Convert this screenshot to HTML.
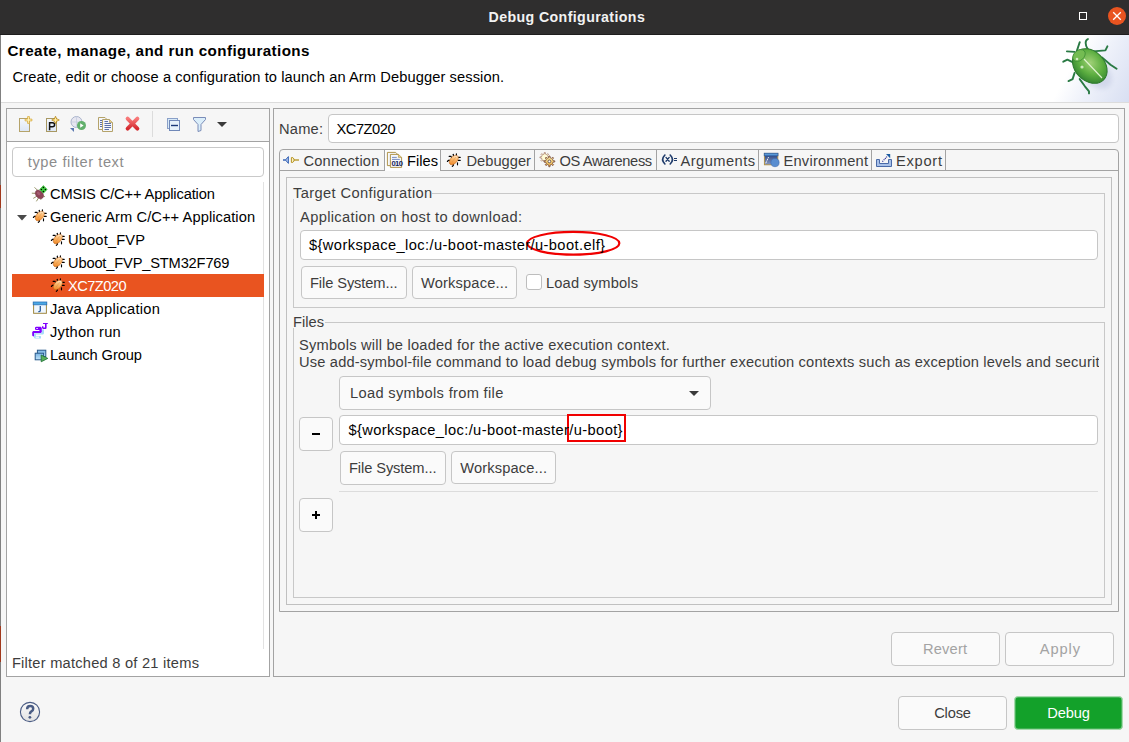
<!DOCTYPE html>
<html><head><meta charset="utf-8">
<style>
html,body{margin:0;padding:0;}
body{width:1129px;height:742px;position:relative;overflow:hidden;background:#f6f6f6;font-family:"Liberation Sans",sans-serif;}
.a{position:absolute;box-sizing:border-box;}
.t{position:absolute;white-space:nowrap;line-height:0;font-family:"Liberation Sans",sans-serif;}
.btn{position:absolute;box-sizing:border-box;background:#fafafa;border:1px solid #c6c6c6;border-radius:4px;}
.inp{position:absolute;box-sizing:border-box;background:#fff;border:1px solid #c6c6c6;border-radius:4px;}
svg{position:absolute;overflow:visible;}
</style></head>
<body>
<!-- title bar -->
<div class="a" style="left:0;top:0;width:1129px;height:35px;background:#2f2e2e;"></div>
<div class="a" style="left:0;top:34px;width:1129px;height:1px;background:#1e1d1d;"></div>
<div class="a" style="left:1079px;top:12px;width:8.4px;height:8.4px;border:1.4px solid #fff;"></div>
<svg style="left:1108px;top:7px" width="18" height="18" viewBox="0 0 18 18">
 <circle cx="9" cy="9" r="9" fill="#e95420"/>
 <path d="M5.2 5.2 L12.8 12.8 M12.8 5.2 L5.2 12.8" stroke="#fff" stroke-width="1.3"/>
</svg>
<!-- header -->
<div class="a" style="left:0;top:35px;width:1129px;height:67px;background:#fff;"></div>
<div class="a" style="left:0;top:102px;width:1129px;height:1px;background:#dcdcdc;"></div>
<div class="a" style="left:1040px;top:35px;width:89px;height:67px;background:linear-gradient(118deg,#ffffff 38%,#eef1fa 62%,#d8dff2 100%);"></div>
<!-- beetle -->
<svg style="left:1049px;top:34px" width="80" height="68" viewBox="0 0 80 68">
 <defs>
  <radialGradient id="bg1" cx="0.45" cy="0.4" r="0.65">
   <stop offset="0" stop-color="#9fd076"/><stop offset="0.55" stop-color="#5cae40"/><stop offset="1" stop-color="#2f7f2f"/>
  </radialGradient>
  <filter id="blr" x="-50%" y="-50%" width="200%" height="200%"><feGaussianBlur stdDeviation="2.5"/></filter>
 </defs>
 <ellipse cx="46" cy="38" rx="20" ry="13" fill="#b8c0dc" opacity="0.45" filter="url(#blr)" transform="rotate(45 46 38)"/>
 <g stroke="#2a7a44" stroke-width="1.9" fill="none" stroke-linecap="round" stroke-linejoin="round">
  <path d="M27.7 17.4 L30.7 8.2"/>
  <path d="M25.6 17.9 L17.9 17.4"/>
  <path d="M38.9 15.4 C35.9 11 35.9 6.1 38.9 5.1"/>
  <path d="M44 17.4 L56.4 16.4 L58.4 12.3"/>
  <path d="M53.3 23.6 L61.5 30.7 L67.6 34.8"/>
  <path d="M24.6 28.7 L18.4 25.6 L14.3 27.7"/>
  <path d="M25.6 38.9 L23.6 45.1 L19.5 47.1"/>
  <path d="M30.7 45.1 L35.9 52.3 L40 57.4 L40 59.4"/>
 </g>
 <ellipse cx="40.8" cy="32" rx="19.5" ry="14.8" fill="url(#bg1)" stroke="#2d7a2d" stroke-width="1" transform="rotate(45 40.8 32)"/>
 <ellipse cx="30" cy="21.5" rx="7" ry="5" fill="#74bc52" stroke="#3a8a34" stroke-width="0.7" transform="rotate(-40 30 21.5)"/>
 <path d="M35 25 L53 44" stroke="#e0f4d0" stroke-width="1.1"/>
 <circle cx="33" cy="33" r="1.6" fill="#e8f6dc" opacity="0.8"/><circle cx="28" cy="25" r="1.3" fill="#e8f6dc" opacity="0.8"/>
</svg>

<!-- left edge sliver -->
<div class="a" style="left:0;top:35px;width:1px;height:707px;background:#808080;"></div>
<div class="a" style="left:0;top:185px;width:1px;height:23px;background:#a0381c;"></div>
<div class="a" style="left:0;top:626px;width:1px;height:36px;background:#a0381c;"></div>

<!-- LEFT PANEL -->
<div class="a" style="left:6px;top:108px;width:264px;height:569px;border:1px solid #a3a3a3;background:#fff;"></div>
<div class="a" style="left:7px;top:109px;width:262px;height:32px;background:#f6f6f6;"></div>
<div class="a" style="left:7px;top:141px;width:262px;height:1px;background:#a3a3a3;"></div>
<div class="a" style="left:152px;top:111px;width:1px;height:26px;background:#dcdcdc;"></div>
<div class="inp" style="left:12px;top:147px;width:252px;height:30px;border-color:#c9c9c9;"></div>
<div class="a" style="left:263px;top:182px;width:1px;height:467px;background:#e2e2e2;"></div>
<div class="a" style="left:12px;top:274px;width:252px;height:23px;background:#e95420;"></div>

<!-- toolbar icons -->
<svg style="left:18px;top:116px" width="16" height="17" viewBox="0 0 16 17">
 <defs><linearGradient id="pg" x1="0" y1="0" x2="0" y2="1"><stop offset="0" stop-color="#f4f7fc"/><stop offset="1" stop-color="#dce6f5"/></linearGradient></defs>
 <rect x="1.5" y="2.5" width="10" height="13" fill="url(#pg)" stroke="#b5a36a"/>
 <path d="M9.6 0.6 H11.4 V3.1 H13.9 V4.9 H11.4 V7.4 H9.6 V4.9 H7.1 V3.1 H9.6 Z" fill="#fff6c0" stroke="#d8a838" stroke-width="0.8"/>
</svg>
<svg style="left:45px;top:116px" width="16" height="17" viewBox="0 0 16 17">
 <rect x="1.5" y="2.5" width="10" height="13" fill="url(#pg)" stroke="#a89862"/>
 <path d="M4.6 14.2 V6.8 H7.4 Q9.6 6.8 9.6 8.8 Q9.6 10.8 7.4 10.8 H4.6" fill="none" stroke="#111" stroke-width="1.5"/>
 <path d="M10.5 0.2 Q11 3.4 14.3 4 Q11 4.6 10.5 7.8 Q10 4.6 6.7 4 Q10 3.4 10.5 0.2 Z" fill="#f2c850" stroke="#b08010" stroke-width="0.7"/>
 <path d="M10.5 2 V6 M8.5 4 H12.5" stroke="#fff8c8" stroke-width="0.7"/>
</svg>
<svg style="left:69px;top:115px" width="18" height="18" viewBox="0 0 18 18">
 <circle cx="7.5" cy="7" r="5.5" fill="#e6e6f0" stroke="#aab4cc" stroke-width="1"/>
 <path d="M2.5 7 H12.5 M7.5 1.5 V12.5" stroke="#c0c8dc" stroke-width="0.7"/>
 <path d="M1 13 L5 13 L5 17 Z" fill="#5a78b0"/>
 <circle cx="12.5" cy="10.5" r="4.5" fill="#62b06c"/>
 <path d="M11.2 8.3 L14.6 10.5 L11.2 12.7 Z" fill="#fff"/>
</svg>
<svg style="left:97px;top:116px" width="17" height="17" viewBox="0 0 17 17">
 <path d="M1.5 1.5 H8 L10 3.5 V13.5 H1.5 Z" fill="#f4f6fb" stroke="#b5a36a"/>
 <path d="M5.5 3.5 H12.5 L15.5 6.5 V15.5 H5.5 Z" fill="#f4f6fb" stroke="#b5a36a"/>
 <path d="M12.5 3.5 V6.5 H15.5" fill="#e8d090" stroke="#b5a36a" stroke-width="0.8"/>
 <path d="M7.5 5.5 H11 M7.5 7.5 H14 M7.5 9.5 H14 M7.5 11.5 H14 M7.5 13.5 H12 M3 4.5 H5 M3 6.5 H5 M3 8.5 H5 M3 10.5 H5" stroke="#5a70a8" stroke-width="1"/>
</svg>
<svg style="left:125px;top:116px" width="15" height="16" viewBox="0 0 15 16">
 <defs><linearGradient id="xg" x1="0" y1="0" x2="0" y2="1"><stop offset="0" stop-color="#f87878"/><stop offset="1" stop-color="#d42a30"/></linearGradient></defs>
 <path d="M2.6 2.6 L12.4 12.6 M12.4 2.6 L2.6 12.6" stroke="url(#xg)" stroke-width="3.9" stroke-linecap="round"/>
</svg>
<svg style="left:166px;top:117px" width="15" height="15" viewBox="0 0 15 15">
 <rect x="1.5" y="1.5" width="10" height="10" fill="#d8eaf8" stroke="#8aa0c8"/>
 <rect x="3.5" y="3.5" width="10" height="10" fill="#e6f2fb" stroke="#7088b8"/>
 <path d="M5 8.5 H12" stroke="#1a3a7a" stroke-width="1.4"/>
</svg>
<svg style="left:192px;top:116px" width="15" height="17" viewBox="0 0 15 17">
 <path d="M1.5 1.5 H13.5 V3.5 L9 8.5 V14.5 L6 15.5 V8.5 L1.5 3.5 Z" fill="#dbeefa" stroke="#7a8cb8"/>
</svg>
<svg style="left:217px;top:122px" width="10" height="5" viewBox="0 0 10 5">
 <path d="M0 0 H10 L5 5 Z" fill="#3a3a3a"/>
</svg>

<!-- tree icons -->
<svg style="left:31px;top:184px" width="18" height="18" viewBox="0 0 18 18">
 <g stroke="#8c8a5a" stroke-width="0.9" fill="none" stroke-linecap="round">
  <path d="M3.8 3.6 L6.4 6.2 M1.2 9.2 L5 9.4 M2.6 14.2 L5.6 12.4 M5.6 17 L7.6 13.8 M9.8 15.4 L10.4 13.6 M13.6 12.6 L11.8 11.6"/>
 </g>
 <ellipse cx="8.4" cy="10.4" rx="3.5" ry="4.9" fill="#8e4458" stroke="#6a3040" stroke-width="0.4" transform="rotate(-42 8.4 10.4)"/>
 <ellipse cx="7.6" cy="9.4" rx="1.4" ry="2" fill="#b06a80" opacity="0.6" transform="rotate(-42 7.6 9.4)"/>
 <path d="M12.4 1.6 L16.2 5.4 L12.4 9.2 L8.6 5.4 Z" fill="#3ed23e" stroke="#1a9a1a" stroke-width="0.5"/>
 <circle cx="12.4" cy="3.4" r="0.75" fill="#000"/><circle cx="14.4" cy="5.4" r="0.75" fill="#000"/><circle cx="10.4" cy="5.4" r="0.75" fill="#000"/><circle cx="12.4" cy="7.4" r="0.75" fill="#000"/>
</svg>
<!-- expand triangle -->
<svg style="left:17px;top:215px" width="10" height="6" viewBox="0 0 10 6"><path d="M0 0 H10 L5 5.5 Z" fill="#4a4a4a"/></svg>

<!-- RIGHT PANEL -->
<div class="a" style="left:273px;top:108px;width:852px;height:569px;border:1px solid #a3a3a3;"></div>
<div class="inp" style="left:328px;top:114px;width:791px;height:29px;"></div>
<!-- tab folder -->
<div class="a" style="left:279px;top:149px;width:840px;height:463px;border:1px solid #a3a3a3;border-radius:4px 4px 0 0;"></div>
<div class="a" style="left:280px;top:170px;width:838px;height:1px;background:#a3a3a3;"></div>
<div class="a" style="left:384px;top:150px;width:57px;height:21px;background:#fdfdfd;border-left:1px solid #a3a3a3;border-right:1px solid #a3a3a3;"></div>
<div class="a" style="left:534px;top:150px;width:1px;height:20px;background:#a3a3a3;"></div>
<div class="a" style="left:656px;top:150px;width:1px;height:20px;background:#a3a3a3;"></div>
<div class="a" style="left:758px;top:150px;width:1px;height:20px;background:#a3a3a3;"></div>
<div class="a" style="left:871px;top:150px;width:1px;height:20px;background:#a3a3a3;"></div>
<div class="a" style="left:945px;top:150px;width:1px;height:20px;background:#a3a3a3;"></div>
<div class="a" style="left:286px;top:177px;width:826px;height:428px;border:1px solid #c0c0c0;"></div>
<!-- target config group -->
<div class="a" style="left:293px;top:193px;width:812px;height:115px;border:1px solid #c8c8c8;"></div>
<div class="a" style="left:292px;top:183px;width:140px;height:16px;background:#f6f6f6;"></div>
<div class="inp" style="left:300px;top:230px;width:798px;height:30px;"></div>
<div class="btn" style="left:301px;top:266px;width:106px;height:33px;"></div>
<div class="btn" style="left:412px;top:266px;width:105px;height:33px;"></div>
<div class="a" style="left:526px;top:274px;width:16px;height:16px;border:1px solid #bdbdbd;border-radius:3px;background:#fff;"></div>
<svg style="left:524px;top:229px" width="100" height="30" viewBox="0 0 100 30">
 <ellipse cx="49.25" cy="14.3" rx="46.1" ry="11.4" fill="none" stroke="#f00000" stroke-width="2.2"/>
</svg>
<!-- files group -->
<div class="a" style="left:293px;top:322px;width:812px;height:276px;border:1px solid #c8c8c8;"></div>
<div class="a" style="left:292px;top:312px;width:33px;height:16px;background:#f6f6f6;"></div>
<div class="btn" style="left:339px;top:376px;width:372px;height:34px;"></div>
<svg style="left:689px;top:391px" width="10" height="5" viewBox="0 0 10 5"><path d="M0 0 H10 L5 5 Z" fill="#3a3a3a"/></svg>
<div class="btn" style="left:299px;top:417px;width:34px;height:34px;"></div>
<div class="a" style="left:312px;top:433px;width:8px;height:2px;background:#000;"></div>
<div class="inp" style="left:339px;top:415px;width:759px;height:30px;"></div>
<div class="btn" style="left:340px;top:451px;width:106px;height:34px;"></div>
<div class="btn" style="left:451px;top:451px;width:105px;height:33px;"></div>
<div class="a" style="left:339px;top:491px;width:759px;height:1px;background:#dcdcdc;"></div>
<div class="btn" style="left:299px;top:498px;width:34px;height:34px;"></div>
<div class="a" style="left:312px;top:514px;width:8px;height:2px;background:#000;"></div>
<div class="a" style="left:315px;top:511px;width:2px;height:8px;background:#000;"></div>
<div class="a" style="left:567px;top:414px;width:59px;height:28px;border:2px solid #f00000;"></div>

<!-- bottom buttons -->
<div class="btn" style="left:891px;top:632px;width:109px;height:34px;"></div>
<div class="btn" style="left:1005px;top:632px;width:109px;height:34px;"></div>
<div class="btn" style="left:898px;top:696px;width:109px;height:34px;"></div>
<div class="a" style="left:1014px;top:696px;width:109px;height:34px;background:#13a12a;border:1px solid #a6dbad;box-shadow:inset 0 0 0 0.6px #6cc07a;border-radius:4px;"></div>
<svg style="left:19px;top:701px" width="22" height="22" viewBox="0 0 22 22">
 <defs><linearGradient id="hg" x1="0" y1="0" x2="0" y2="1"><stop offset="0" stop-color="#fbfbfb"/><stop offset="1" stop-color="#e2e2e2"/></linearGradient></defs>
 <circle cx="11" cy="11" r="9.6" fill="url(#hg)" stroke="#4a5c84" stroke-width="1.1"/>
 <path d="M8.1 8.2 Q8.2 5.1 11.2 5.1 Q14.2 5.1 14.2 7.7 Q14.2 9.4 12.4 10.4 Q11 11.2 11 12.6 V13.3" fill="none" stroke="#4a5c84" stroke-width="2.5"/>
 <circle cx="10.9" cy="16.3" r="1.4" fill="#4a5c84"/>
</svg>


<!-- symbol defs -->
<svg width="0" height="0" style="position:absolute;left:0;top:0">
 <defs>
  <linearGradient id="bugg" x1="0.3" y1="0" x2="0.7" y2="1">
   <stop offset="0" stop-color="#fff2dc"/><stop offset="0.35" stop-color="#fcc07a"/><stop offset="1" stop-color="#ee8420"/>
  </linearGradient>
  <symbol id="bug" viewBox="0 0 20 20">
   <g stroke="#000" stroke-width="1.15" fill="none" stroke-linecap="round">
    <path d="M9.4 4.2 V6"/><path d="M12.4 3.9 V6"/>
    <path d="M14.3 7.4 H16.2"/><path d="M14.3 10.4 H16.2"/>
    <path d="M5.1 6.3 H6.9 L7.7 7.8"/><path d="M6 10.4 H4.4 L3.4 11.5"/>
    <path d="M9.3 14.3 V15.5 L8.3 16.4"/><path d="M13.5 12.7 V14.8"/>
   </g>
   <ellipse cx="9.8" cy="10" rx="3.4" ry="5.6" fill="url(#bugg)" stroke="#c06010" stroke-width="0.5" transform="rotate(42 9.8 10)"/>
   <path d="M8 12 L12 7" stroke="#c87830" stroke-width="0.5" opacity="0.6"/>
  </symbol>
 </defs>
</svg>
<!-- tree bug icons -->
<svg style="left:30px;top:206px" width="20" height="20"><use href="#bug" width="20" height="20"/></svg>
<svg style="left:48px;top:229px" width="20" height="20"><use href="#bug" width="20" height="20"/></svg>
<svg style="left:48px;top:252px" width="20" height="20"><use href="#bug" width="20" height="20"/></svg>
<svg style="left:48px;top:275px" width="20" height="20"><use href="#bug" width="20" height="20"/></svg>
<!-- java -->
<svg style="left:30px;top:298px" width="20" height="20" viewBox="0 0 20 20">
 <rect x="3.6" y="4.5" width="12.8" height="10.8" fill="#eef7ff" stroke="#a08840" stroke-width="1"/>
 <rect x="3.2" y="4" width="13.6" height="2.8" fill="#4aa8e4" stroke="#2a70b8" stroke-width="0.8"/>
 <path d="M10.3 8 V12.6 Q10.3 13.6 9.2 13.6 H8.3" stroke="#2a5a98" stroke-width="1.3" fill="none"/>
</svg>
<!-- jython -->
<svg style="left:30px;top:321px" width="20" height="20" viewBox="0 0 20 20">
 <path d="M12 8.5 H14 V12.4 L13 13.6 H6 V15 H10.6 L11 15.6 V17.6 H4.8 L4 16.8 V12.2 H11.4 Z" fill="#a8dcf8"/>
 <path d="M5.6 15.6 H9 V16.8 H5.6 Z" fill="#fff"/>
 <path d="M6 5.8 H10.8 L11.8 7 V11 L10.8 12 H4 V15.2 L3.2 15.6 L2.2 14.6 V11 L3.2 10 H9.4 V9 H5.8 L5 8.2 V6.6 Z" fill="#8000ff"/>
 <path d="M6.2 7 H8 V7.8 H6.2 Z" fill="#fff"/>
 <path d="M13 2 H17.8 V2.9 H16.6 V7.2 L15.8 8 H13 L12 7 V5.2 H13.4 V6.6 H15 V2.9 H13 Z" fill="#8000ff"/>
</svg>
<!-- launch group -->
<svg style="left:30px;top:344px" width="20" height="20" viewBox="0 0 20 20">
 <defs><linearGradient id="lgb" x1="0" y1="0" x2="0" y2="1"><stop offset="0" stop-color="#7ab4e4"/><stop offset="1" stop-color="#c0e4fa"/></linearGradient></defs>
 <rect x="7.4" y="6.2" width="8.4" height="6.4" fill="url(#lgb)" stroke="#2a5a8a" stroke-width="1"/>
 <rect x="5.2" y="9.2" width="8.4" height="6.6" fill="url(#lgb)" stroke="#2a5a8a" stroke-width="1"/>
 <path d="M11.2 11 L17.8 14.4 L11.2 17.8 Z" fill="#5ab05a" stroke="#1a7030" stroke-width="0.8"/>
</svg>

<!-- tab icons -->
<svg style="left:280px;top:150px" width="20" height="20" viewBox="0 0 20 20">
 <path d="M3 9.3 H5.6 V10.7 H3 Z" fill="#2a5ab0"/>
 <path d="M5.4 10 L8.4 6.6 V13.4 Z" fill="#a8c0e8" stroke="#2a5ab0" stroke-width="0.9"/>
 <path d="M12.8 7.6 H11.4 V12.4 H12.8 L14 11 V9 Z" fill="#f8f0c8" stroke="#b08a10" stroke-width="0.9"/>
 <path d="M14 9.4 H19 V10.6 H14 Z" fill="#b08a10"/>
</svg>
<svg style="left:385px;top:150px" width="20" height="20" viewBox="0 0 20 20">
 <path d="M2.4 2.4 H10.6 L12 3.8 V15.6 H2.4 Z" fill="#f6f8fc" stroke="#a88a38" stroke-width="0.9"/>
 <path d="M5.4 4.4 H13.4 L16.6 7.4 V17.4 H5.4 Z" fill="#f6f8fc" stroke="#a88a38" stroke-width="0.9"/>
 <path d="M13.4 4.4 V7.4 H16.6" fill="#e8d090" stroke="#a88a38" stroke-width="0.6"/>
 <path d="M7 7.4 H11.8 M7 9.4 H14.8" stroke="#6a80b8" stroke-width="0.9"/>
 <text x="6.4" y="16" font-family="Liberation Sans" font-size="7.6" font-weight="bold" fill="#13245e" letter-spacing="-0.5">010</text>
</svg>
<svg style="left:443.5px;top:150.2px" width="20" height="20"><use href="#bug" width="20" height="20"/></svg>
<svg style="left:537px;top:150px" width="20" height="20" viewBox="0 0 20 20">
 <defs><linearGradient id="gg" x1="0" y1="0" x2="0" y2="1"><stop offset="0" stop-color="#fff6b0"/><stop offset="1" stop-color="#e8a840"/></linearGradient></defs>
 <path d="M7.22 4.05 L7.30 2.53 L8.30 2.53 L8.38 4.05 L9.76 4.62 L10.89 3.60 L11.60 4.31 L10.58 5.44 L11.15 6.82 L12.67 6.90 L12.67 7.90 L11.15 7.98 L10.58 9.36 L11.60 10.49 L10.89 11.20 L9.76 10.18 L8.38 10.75 L8.30 12.27 L7.30 12.27 L7.22 10.75 L5.84 10.18 L4.71 11.20 L4.00 10.49 L5.02 9.36 L4.45 7.98 L2.93 7.90 L2.93 6.90 L4.45 6.82 L5.02 5.44 L4.00 4.31 L4.71 3.60 L5.84 4.62 Z" fill="#fffbd6" stroke="#a88070" stroke-width="0.8"/>
 <path d="M11.75 7.66 L11.85 6.03 L12.95 6.03 L13.05 7.66 L14.59 8.29 L15.81 7.21 L16.59 7.99 L15.51 9.21 L16.14 10.75 L17.77 10.85 L17.77 11.95 L16.14 12.05 L15.51 13.59 L16.59 14.81 L15.81 15.59 L14.59 14.51 L13.05 15.14 L12.95 16.77 L11.85 16.77 L11.75 15.14 L10.21 14.51 L8.99 15.59 L8.21 14.81 L9.29 13.59 L8.66 12.05 L7.03 11.95 L7.03 10.85 L8.66 10.75 L9.29 9.21 L8.21 7.99 L8.99 7.21 L10.21 8.29 Z" fill="url(#gg)" stroke="#7a5040" stroke-width="0.9"/>
 <circle cx="12.4" cy="11.4" r="1.4" fill="#fff" stroke="#5a4a48" stroke-width="0.9"/>
</svg>
<svg style="left:660px;top:150px" width="20" height="20" viewBox="0 0 20 20">
 <path d="M4.9 5 Q0.4 9.5 4.9 14" stroke="#1e3a6a" stroke-width="1.6" fill="none" stroke-linecap="round"/>
 <path d="M10.2 5 Q14.7 9.5 10.2 14" stroke="#1e3a6a" stroke-width="1.6" fill="none" stroke-linecap="round"/>
 <path d="M6 7.4 L9.2 11.3 M9.2 7.4 L6 11.3" stroke="#1e3a6a" stroke-width="1.35" stroke-linecap="round"/>
 <path d="M14 8.5 H17 M14 10.5 H17" stroke="#1e3a6a" stroke-width="1.2"/>
</svg>
<svg style="left:762px;top:150px" width="20" height="20" viewBox="0 0 20 20">
 <defs><linearGradient id="eg" x1="0" y1="0" x2="0" y2="1"><stop offset="0" stop-color="#1e3a78"/><stop offset="1" stop-color="#8a9ac0"/></linearGradient></defs>
 <rect x="2.4" y="3.4" width="13.4" height="11.4" fill="url(#eg)" stroke="#b09040" stroke-width="0.9"/>
 <rect x="2.2" y="3.2" width="13.8" height="2.6" fill="#5a9ad8" stroke="#2a5aa0" stroke-width="0.7"/>
 <path d="M3.8 13.2 L6.6 7" stroke="#fff" stroke-width="1" stroke-dasharray="1.2 0.6"/>
 <circle cx="13" cy="12.6" r="4.1" fill="#5a8ed0" stroke="#3a6ab0" stroke-width="0.6"/>
</svg>
<svg style="left:874px;top:150px" width="20" height="20" viewBox="0 0 20 20">
 <path d="M2.5 9.5 H5.5 V13.5 H14.5 V9.5 H17.5 V16.5 H2.5 Z" fill="#a8c0e8" stroke="#4a6aa8" stroke-width="1"/>
 <path d="M8.4 11.6 L13 6.6" stroke="#2a2a98" stroke-width="1.15" stroke-dasharray="1.1 0.8"/>
 <path d="M12 4 H16.2 V8.2 Z" fill="#1a5aa0"/>
</svg>

<div class="t" style="left:488.50px;top:16.58px;font-size:14.2px;color:#f2f2f2;font-weight:bold;letter-spacing:0.387px;">Debug Configurations</div>
<div class="t" style="left:7.50px;top:50.73px;font-size:15.2px;color:#000;font-weight:bold;letter-spacing:0.407px;">Create, manage, and run configurations</div>
<div class="t" style="left:12.50px;top:76.62px;font-size:14.67px;color:#000;letter-spacing:0.094px;">Create, edit or choose a configuration to launch an Arm Debugger session.</div>
<div class="t" style="left:27.80px;top:162.12px;font-size:14.67px;color:#8c8c8c;letter-spacing:0.576px;">type filter text</div>
<div class="t" style="left:50.00px;top:193.72px;font-size:14.67px;color:#000;letter-spacing:-0.133px;">CMSIS C/C++ Application</div>
<div class="t" style="left:50.00px;top:216.72px;font-size:14.67px;color:#000;letter-spacing:0.080px;">Generic Arm C/C++ Application</div>
<div class="t" style="left:68.00px;top:239.72px;font-size:14.67px;color:#000;letter-spacing:0.154px;">Uboot_FVP</div>
<div class="t" style="left:68.00px;top:262.72px;font-size:14.67px;color:#000;letter-spacing:-0.170px;">Uboot_FVP_STM32F769</div>
<div class="t" style="left:68.00px;top:285.72px;font-size:14.67px;color:#fff;letter-spacing:-0.553px;">XC7Z020</div>
<div class="t" style="left:50.00px;top:308.72px;font-size:14.67px;color:#000;letter-spacing:0.265px;">Java Application</div>
<div class="t" style="left:50.00px;top:331.72px;font-size:14.67px;color:#000;letter-spacing:0.252px;">Jython run</div>
<div class="t" style="left:50.00px;top:354.72px;font-size:14.67px;color:#000;letter-spacing:-0.081px;">Launch Group</div>
<div class="t" style="left:11.90px;top:663.12px;font-size:14.67px;color:#3d3d3d;letter-spacing:0.232px;">Filter matched 8 of 21 items</div>
<div class="t" style="left:279.00px;top:128.52px;font-size:14.67px;color:#3d3d3d;letter-spacing:0.208px;">Name:</div>
<div class="t" style="left:336.50px;top:128.52px;font-size:14.67px;color:#000;letter-spacing:-0.469px;">XC7Z020</div>
<div class="t" style="left:303.50px;top:161.12px;font-size:14.67px;color:#3d3d3d;letter-spacing:0.184px;">Connection</div>
<div class="t" style="left:407.00px;top:161.12px;font-size:14.67px;color:#000;letter-spacing:0.014px;">Files</div>
<div class="t" style="left:466.50px;top:161.12px;font-size:14.67px;color:#3d3d3d;letter-spacing:0.018px;">Debugger</div>
<div class="t" style="left:559.50px;top:161.12px;font-size:14.67px;color:#3d3d3d;letter-spacing:-0.362px;">OS Awareness</div>
<div class="t" style="left:680.50px;top:161.12px;font-size:14.67px;color:#3d3d3d;letter-spacing:0.454px;">Arguments</div>
<div class="t" style="left:783.50px;top:161.12px;font-size:14.67px;color:#3d3d3d;letter-spacing:0.222px;">Environment</div>
<div class="t" style="left:896.00px;top:161.12px;font-size:14.67px;color:#3d3d3d;letter-spacing:0.728px;">Export</div>
<div class="t" style="left:293.00px;top:193.12px;font-size:14.67px;color:#3d3d3d;letter-spacing:0.380px;">Target Configuration</div>
<div class="t" style="left:300.00px;top:217.12px;font-size:14.67px;color:#3d3d3d;letter-spacing:0.354px;">Application on host to download:</div>
<div class="t" style="left:309.00px;top:245.12px;font-size:14.67px;color:#000;letter-spacing:0.404px;">${workspace_loc:/u-boot-master/u-boot.elf}</div>
<div class="t" style="left:310.00px;top:283.12px;font-size:14.67px;color:#3d3d3d;letter-spacing:-0.098px;">File System...</div>
<div class="t" style="left:421.00px;top:283.12px;font-size:14.67px;color:#3d3d3d;letter-spacing:0.159px;">Workspace...</div>
<div class="t" style="left:546.00px;top:283.12px;font-size:14.67px;color:#3d3d3d;letter-spacing:0.143px;">Load symbols</div>
<div class="t" style="left:293.00px;top:322.12px;font-size:14.67px;color:#3d3d3d;letter-spacing:0.014px;">Files</div>
<div class="t" style="left:299.00px;top:345.12px;font-size:14.67px;color:#3d3d3d;letter-spacing:0.211px;">Symbols will be loaded for the active execution context.</div>
<div class="t" style="left:299.00px;top:352.12px;font-size:14.67px;color:#3d3d3d;width:799.5px;overflow:hidden;line-height:20px;height:20px;letter-spacing:0.173px;">Use add-symbol-file command to load debug symbols for further execution contexts such as exception levels and security states.</div>
<div class="t" style="left:350.00px;top:393.12px;font-size:14.67px;color:#3d3d3d;letter-spacing:0.318px;">Load symbols from file</div>
<div class="t" style="left:348.50px;top:430.12px;font-size:14.67px;color:#000;letter-spacing:0.382px;">${workspace_loc:/u-boot-master/u-boot}</div>
<div class="t" style="left:349.00px;top:467.62px;font-size:14.67px;color:#3d3d3d;letter-spacing:-0.098px;">File System...</div>
<div class="t" style="left:460.30px;top:467.62px;font-size:14.67px;color:#3d3d3d;letter-spacing:0.141px;">Workspace...</div>
<div class="t" style="left:923.00px;top:648.62px;font-size:14.67px;color:#a3a3a3;letter-spacing:0.167px;">Revert</div>
<div class="t" style="left:1039.80px;top:648.62px;font-size:14.67px;color:#a3a3a3;letter-spacing:0.884px;">Apply</div>
<div class="t" style="left:934.20px;top:712.72px;font-size:14.67px;color:#3d3d3d;letter-spacing:-0.168px;">Close</div>
<div class="t" style="left:1047.20px;top:712.72px;font-size:14.67px;color:#ffffff;letter-spacing:-0.097px;">Debug</div>
</body></html>
